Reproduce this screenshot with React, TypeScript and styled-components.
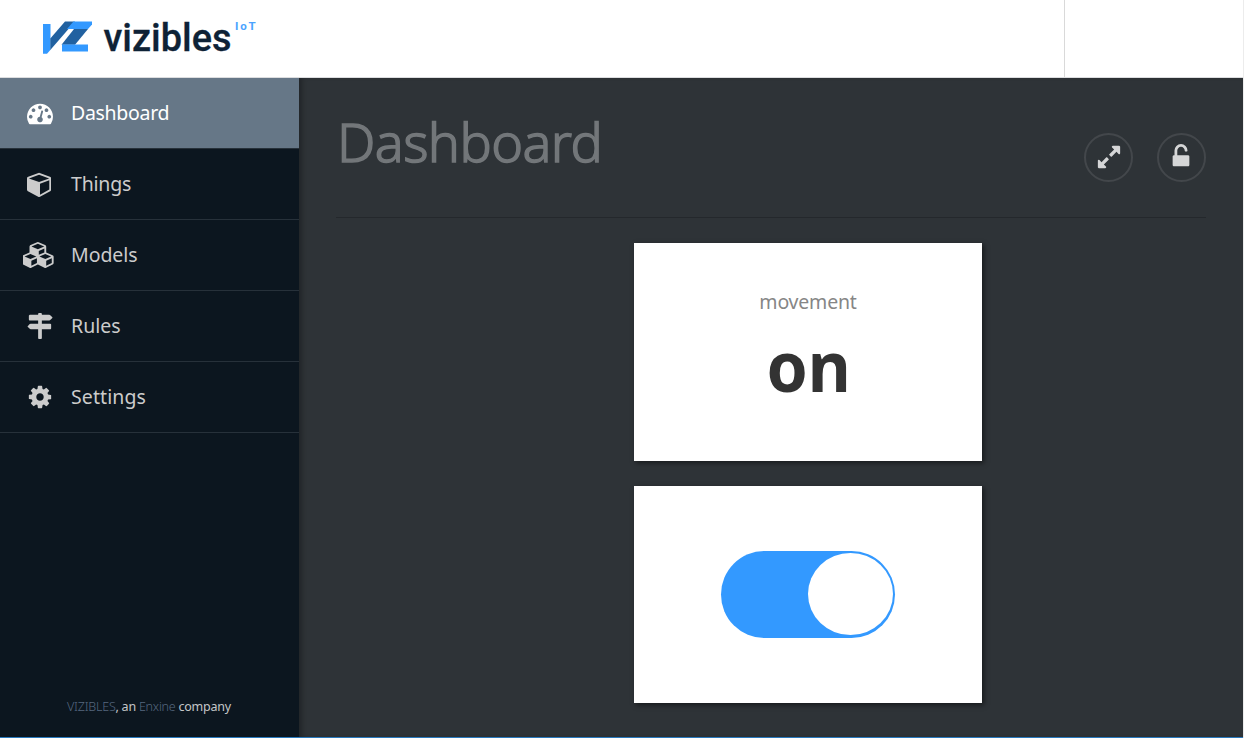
import React from "react";
import styled, { createGlobalStyle } from "styled-components";

const GlobalStyle = createGlobalStyle`
  * { box-sizing: border-box; }
  body { margin: 0; background: #ececec; font-family: "Noto Sans", "Open Sans", sans-serif; overflow: hidden; }
`;

const Page = styled.div`
  width: 1243px;
  height: 738px;
  display: flex;
  flex-direction: column;
  border-bottom: 1px solid #2879bd;
  background: #fff;
`;

const Header = styled.header`
  height: 78px;
  flex: none;
  display: flex;
  justify-content: space-between;
  border-bottom: 1px solid #dcdddf;
  background: #fff;
`;

const Logo = styled.svg`
  display: block;
  width: 300px;
  height: 77px;
`;

const UserArea = styled.div`
  width: 179px;
  border-left: 1px solid #d9d9d9;
`;

const Body = styled.div`
  flex: 1;
  display: flex;
  min-height: 0;
`;

const Sidebar = styled.aside`
  width: 299px;
  flex: none;
  display: flex;
  flex-direction: column;
  justify-content: space-between;
  background: #0c161f;
`;

const Nav = styled.nav`
  display: flex;
  flex-direction: column;
`;

const NavItem = styled.a<{ $active?: boolean }>`
  height: 71px;
  display: flex;
  align-items: center;
  border-bottom: 1px solid #27313a;
  background: ${(p) => (p.$active ? "#667787" : "transparent")};
  color: ${(p) => (p.$active ? "#fff" : "#ccc")};
`;

const NavIcon = styled.span<{ $inset: number }>`
  width: 71px;
  display: flex;
  justify-content: center;
  padding-left: ${(p) => p.$inset}px;
`;

const NavLabel = styled.span<{ $spacing: number }>`
  font-size: 19.5px;
  line-height: 26px;
  letter-spacing: ${(p) => p.$spacing}px;
`;

const Glyph = styled.svg`
  display: block;
  flex: none;
  fill: currentColor;
`;

const Credit = styled.footer`
  height: 47px;
  padding: 8px 0 0 67px;
  font-size: 12.5px;
  line-height: 17px;
  letter-spacing: -0.23px;
  color: #c4c6c8;
  white-space: nowrap;
`;

const CreditLink = styled.a`
  color: #56687f;
  font-weight: 300;
`;

const Main = styled.main`
  flex: 1;
  background: #2e3337;
  padding: 0 37px;
  box-shadow: inset 5px 0 5px -2px rgba(0, 0, 0, 0.28);
`;

const TitleBar = styled.div`
  height: 140px;
  display: flex;
  justify-content: space-between;
  border-bottom: 1px solid #24282c;
`;

const Title = styled.h1`
  margin: 26px 0 0 1px;
  font-size: 54px;
  line-height: 74px;
  font-weight: 300;
  letter-spacing: -0.6px;
  color: #73777a;
  -webkit-text-stroke: 1.4px #73777a;
`;

const Actions = styled.div`
  display: flex;
  gap: 24px;
  padding-top: 55px;
`;

const RoundButton = styled.button`
  width: 49px;
  height: 49px;
  padding: 0 0 2px 0;
  display: flex;
  align-items: center;
  justify-content: center;
  border: 2px solid #43474b;
  border-radius: 50%;
  background: transparent;
  color: #d5d6d7;
`;

const Widgets = styled.section`
  display: flex;
  flex-direction: column;
  align-items: center;
  gap: 25px;
  padding: 25px 0 0 74px;
`;

const Card = styled.article<{ $height: number }>`
  width: 348px;
  height: ${(p) => p.$height}px;
  display: flex;
  flex-direction: column;
  align-items: center;
  background: #fff;
  box-shadow: 2px 2px 5px rgba(0, 0, 0, 0.5);
`;

const CardLabel = styled.div`
  margin-top: 46px;
  font-size: 19.5px;
  line-height: 26px;
  letter-spacing: -0.2px;
  color: #868686;
`;

const CardValue = styled.div`
  margin-top: 5px;
  padding-left: 1px;
  font-size: 70px;
  line-height: 90px;
  font-weight: 700;
  color: #333;
  transform: scaleX(0.945);
`;

const Switch = styled.button`
  width: 174px;
  height: 87px;
  margin: 65px 0 0;
  padding: 2px;
  display: flex;
  justify-content: flex-end;
  border: 0;
  border-radius: 44px;
  background: #3399ff;
`;

const Knob = styled.span`
  width: 85px;
  height: 82px;
  border-radius: 50%;
  background: #fff;
`;

const icons = {
  dashboard: {
    w: 1792,
    d: "M384 1152q0-53-37.5-90.5t-90.5-37.5-90.5 37.5-37.5 90.5 37.5 90.5 90.5 37.5 90.5-37.5 37.5-90.5zm192-448q0-53-37.5-90.5t-90.5-37.5-90.5 37.5-37.5 90.5 37.5 90.5 90.5 37.5 90.5-37.5 37.5-90.5zm428 481l101-382q6-26-7.5-48.5t-38.5-29.5-48 6.5-30 39.5l-101 382q-60 5-107 43.5t-63 98.5q-20 77 20 146t117 89 146-20 89-117q16-60-6-117t-72-91zm660-33q0-53-37.5-90.5t-90.5-37.5-90.5 37.5-37.5 90.5 37.5 90.5 90.5 37.5 90.5-37.5 37.5-90.5zm-640-640q0-53-37.5-90.5t-90.5-37.5-90.5 37.5-37.5 90.5 37.5 90.5 90.5 37.5 90.5-37.5 37.5-90.5zm448 192q0-53-37.5-90.5t-90.5-37.5-90.5 37.5-37.5 90.5 37.5 90.5 90.5 37.5 90.5-37.5 37.5-90.5zm320 448q0 261-141 483-19 29-54 29h-1402q-35 0-54-29-141-221-141-483 0-182 71-348t191-286 286-191 348-71 348 71 286 191 191 286 71 348z",
  },
  cube: {
    w: 1664,
    d: "M896 1629l640-349v-636l-640 233v752zm-64-865l698-254-698-254-698 254zm832-252v768q0 35-18 65t-49 47l-704 384q-28 16-61 16t-61-16l-704-384q-31-17-49-47t-18-65v-768q0-40 23-73t61-47l704-256q22-8 44-8t44 8l704 256q38 14 61 47t23 73z",
  },
  cubes: {
    w: 2176,
    d: "M576 1632l384-192v-314l-384 164v342zm-64-454l404-173-404-173-404 173zm1088 454l384-192v-314l-384 164v342zm-64-454l404-173-404-173-404 173zm-448-293l384-165v-266l-384 164v267zm-64-379l441-189-441-189-441 189zm1088 518v416q0 36-19 67t-52 47l-448 224q-25 14-57 14t-57-14l-448-224q-5-2-7-4-2 2-7 4l-448 224q-25 14-57 14t-57-14l-448-224q-33-16-52-47t-19-67v-416q0-38 21.5-70t56.5-48l434-186v-400q0-38 21.5-70t56.5-48l448-192q23-10 50-10t50 10l448 192q35 16 56.5 48t21.5 70v400l434 186q36 16 57 48t21 70z",
  },
  signs: {
    w: 1792,
    d: "M1745 297q10 10 10 23t-10 23l-141 141q-28 28-68 28h-1344q-26 0-45-19t-19-45v-256q0-26 19-45t45-19h576v-64q0-26 19-45t45-19h128q26 0 45 19t19 45v64h512q40 0 68 28zM768 1120h256v608q0 26-19 45t-45 19h-128q-26 0-45-19t-19-45zM1600 736q26 0 45 19t19 45v256q0 26-19 45t-45 19h-1344q-40 0-68-28l-141-141q-10-10-10-23t10-23l141-141q28-28 68-28h512v-224h256v224h576z",
  },
  cog: {
    w: 1792,
    d: "M1152 896q0-106-75-181t-181-75-181 75-75 181 75 181 181 75 181-75 75-181zm512-109v222q0 12-8 23t-20 13l-185 28q-19 54-39 91 35 50 107 138 10 12 10 25t-9 23q-27 37-99 108t-94 71q-12 0-26-9l-138-108q-44 23-91 38-16 136-29 186-7 28-36 28h-222q-14 0-24.5-8.5t-11.5-21.5l-28-184q-49-16-90-37l-141 107q-10 9-25 9-14 0-25-11-126-114-165-168-7-10-7-23 0-12 8-23 15-21 51-66.5t54-70.5q-27-50-41-99l-183-27q-13-2-21-12.5t-8-23.5v-222q0-12 8-23t19-13l186-28q14-46 39-92-40-57-107-138-10-12-10-24 0-10 9-23 26-36 98.5-107.5t94.5-71.5q13 0 26 10l138 107q44-23 91-38 16-136 29-186 7-28 36-28h222q14 0 24.5 8.5t11.5 21.5l28 184q49 16 90 37l142-107q9-9 24-9 13 0 25 10 129 119 165 170 7 8 7 22 0 12-8 23-15 21-51 66.5t-54 70.5q26 50 41 98l183 28q13 2 21 12.5t8 23.5z",
  },
  expand: {
    w: 1792,
    d: "M883 1056q0 13-10 23l-332 332 144 144q19 19 19 45t-19 45-45 19h-448q-26 0-45-19t-19-45v-448q0-26 19-45t45-19 45 19l144 144 332-332q10-10 23-10t23 10l114 114q10 10 10 23zm781-864v448q0 26-19 45t-45 19-45-19l-144-144-332 332q-10 10-23 10t-23-10l-114-114q-10-10-10-23t10-23l332-332-144-144q-19-19-19-45t19-45 45-19h448q26 0 45 19t19 45z",
  },
  unlock: {
    w: 1872,
    d: "M1376 768q40 0 68 28t28 68v576q0 40-28 68t-68 28h-960q-40 0-68-28t-28-68v-576q0-40 28-68t68-28h32v-320q0-185 131.5-316.5t316.5-131.5 316.5 131.5 131.5 316.5q0 26-19 45t-45 19h-64q-26 0-45-19t-19-45q0-106-75-181t-181-75-181 75-75 181v320h736z",
  },
};

type IconName = keyof typeof icons;

function Icon({ name, size = 26 }: { name: IconName; size?: number }) {
  const { w, d } = icons[name];
  return (
    <Glyph width={(size * w) / 1792} height={size} viewBox={`0 0 ${w} 1792`} aria-hidden="true">
      <path d={d} />
    </Glyph>
  );
}

const navItems: { icon: IconName; label: string; spacing: number; inset: number; active?: boolean }[] = [
  { icon: "dashboard", label: "Dashboard", spacing: -0.3, inset: 8, active: true },
  { icon: "cube", label: "Things", spacing: -0.2, inset: 7.5 },
  { icon: "cubes", label: "Models", spacing: -0.05, inset: 7 },
  { icon: "signs", label: "Rules", spacing: 0, inset: 9 },
  { icon: "cog", label: "Settings", spacing: 0.1, inset: 8 },
];

export default function App() {
  return (
    <>
      <GlobalStyle />
      <Page>
        <Header>
          <Logo viewBox="0 0 300 77" role="img" aria-label="vizibles IoT">
            <path fill="#3399ff" d="M43 24H50.500V49.800L47 53.700H43Z" />
            <path fill="#2161a0" d="M50.300 38.500L65 21.500H75L50.300 50Z" />
            <path fill="#3399ff" d="M73.500 21.500H92V24.500L88 29H67Z" />
            <path fill="#2161a0" d="M74 29H88L75 44.800H61.500Z" />
            <path fill="#3399ff" d="M62 44.500H88V51.500H62Z" />
            <text x="103.500" y="51.300" fontFamily="Roboto, sans-serif" fontSize="39" fontWeight="500" fill="#0e2236" stroke="#0e2236" strokeWidth="0.300" textLength="128" lengthAdjust="spacingAndGlyphs">
              vizibles
            </text>
            <text x="235" y="29.900" fontFamily="Roboto, sans-serif" fontSize="11.500" fontWeight="700" fill="#4aa3ff" letterSpacing="1.800">
              IoT
            </text>
          </Logo>
          <UserArea />
        </Header>
        <Body>
          <Sidebar>
            <Nav>
              {navItems.map((item) => (
                <NavItem key={item.label} $active={item.active}>
                  <NavIcon $inset={item.inset}>
                    <Icon name={item.icon} />
                  </NavIcon>
                  <NavLabel $spacing={item.spacing}>{item.label}</NavLabel>
                </NavItem>
              ))}
            </Nav>
            <Credit>
              <CreditLink>VIZIBLES</CreditLink>, an <CreditLink>Enxine</CreditLink> company
            </Credit>
          </Sidebar>
          <Main>
            <TitleBar>
              <Title>Dashboard</Title>
              <Actions>
                <RoundButton aria-label="Expand">
                  <Icon name="expand" />
                </RoundButton>
                <RoundButton aria-label="Unlock">
                  <Icon name="unlock" />
                </RoundButton>
              </Actions>
            </TitleBar>
            <Widgets>
              <Card $height={218}>
                <CardLabel>movement</CardLabel>
                <CardValue>on</CardValue>
              </Card>
              <Card $height={217}>
                <Switch role="switch" aria-checked="true">
                  <Knob />
                </Switch>
              </Card>
            </Widgets>
          </Main>
        </Body>
      </Page>
    </>
  );
}
